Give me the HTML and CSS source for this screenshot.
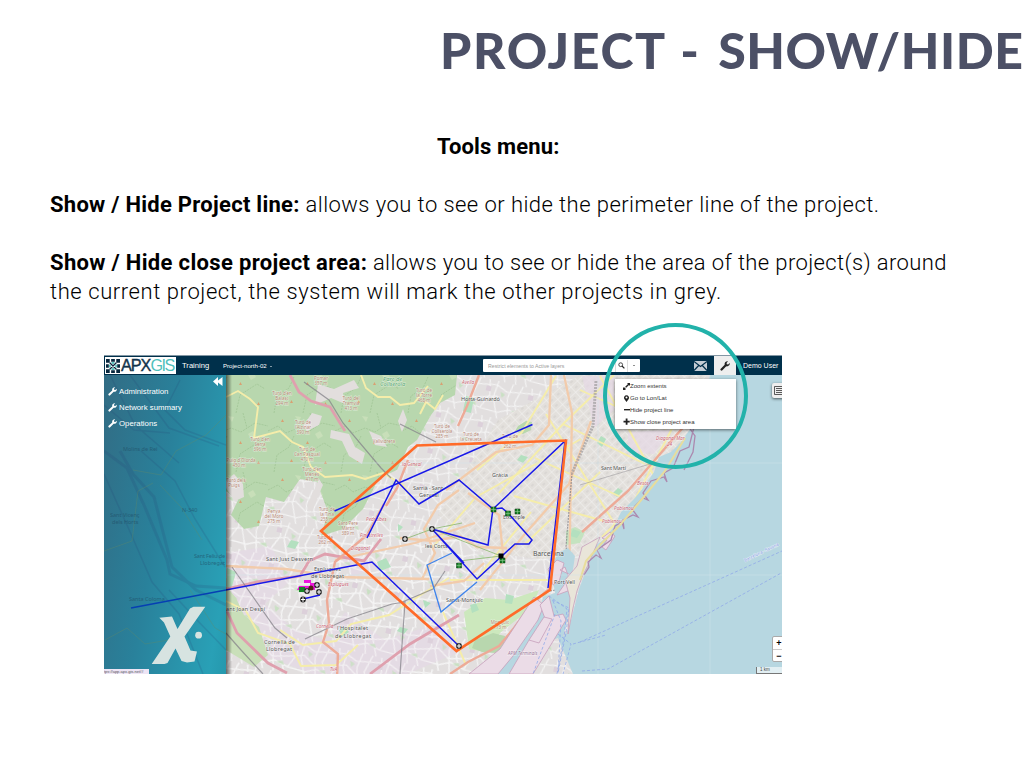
FILE: index.html
```html
<!DOCTYPE html>
<html lang="en">
<head>
<meta charset="utf-8">
<title>Project - Show/Hide</title>
<link rel="stylesheet" href="styles.css">
</head>
<body>
<main class="slide">
<h1 class="title"><span class="t1">PROJECT</span> - <span class="t2">SHOW/HIDE</span></h1>
<section class="copy">
<h2 class="subtitle"><span class="s0">Tools menu:</span></h2>
<p><b class="s1">Show / Hide Project line:</b><span class="s2"> allows you to see or hide the perimeter line of the project.</span></p>
<p><b class="s3">Show / Hide close project area:</b><span class="s4"> allows you to see or hide the area of the project(s) around</span><br><span class="s5">the current project, the system will mark the other projects in grey.</span></p>
</section>
<section class="app">
<svg class="defs" width="0" height="0"><defs><symbol id="wrench" viewBox="0 0 16 16"><path d="M1.200 12.200 7.500 6A4.500 4.500 0 0 1 12.800.5L10.500 3l.4 2.100 2.100.4 2.500-2.300A4.500 4.500 0 0 1 10 8.500l-6.200 6.300A1.800 1.800 0 0 1 1.200 12.200Z"/></symbol></defs></svg>
<header class="bar">
<div class="logo">
<svg width="15" height="15" viewBox="0 0 15 15"><path fill="#08283f" d="M0 0h4v4H0zM5.500 0h4v3h-4zM11 0h4v4h-4zM0 5.500h3v4H0zM12 5.500h3v4h-3zM0 11h4v4H0zM5.500 12h4v3h-4zM11 11h4v4h-4zM3.500 4.500 4.500 3.500 11.500 10.500 10.500 11.500zM10.500 3.500l1 1-7 7-1-1z"/><path fill="#25b2aa" d="M3.500 5.500l2 2-2 2zM11.500 5.500v4l-2-2zM5.500 3.500h4l-2 2zM5.500 11.500l2-2 2 2z"/></svg>
<span class="apx">APX</span><span class="gis">GIS</span>
</div>
<span class="nav">Training</span><span class="project">Project-north-02 <i></i></span>
<div class="search"><span>Restrict elements to Active layers</span><b><svg width="7" height="7" viewBox="0 0 7 7"><circle cx="2.700" cy="2.700" r="1.900" fill="none" stroke="#222" stroke-width=".8"/><path d="m4 4 2.400 2.400" stroke="#222" stroke-width="1.200"/></svg></b><b><i></i></b></div>
<svg class="mail" width="13" height="10" viewBox="0 0 13 10"><path fill="#c4cdd5" d="M0 0h13v10H0z"/><path d="m0 .5 6.500 5 6.500-5M0 9.500l4.700-5M13 9.500l-4.700-5" fill="none" stroke="#00304b" stroke-width="1.200"/></svg>
<span class="tool"><svg width="10" height="10"><use href="#wrench"/></svg></span><span class="user">Demo User</span>
</header>
<div class="stage">
<svg class="map" viewBox="104 375 678 299" width="678" height="299">
<defs>
<pattern id="grid" width="9" height="7" patternUnits="userSpaceOnUse" patternTransform="rotate(-43)"><path d="M0 0h9M0 0v7" stroke="#f3f2f1" stroke-width="1.100"/><path d="M3 3h3v2H3z" fill="#dad7d4"/></pattern>
<pattern id="mesh" width="43" height="37" patternUnits="userSpaceOnUse" patternTransform="rotate(13)"><path d="M0 6 12 4 23 9 43 6M0 19l14-4 12 8 17-4M4 0l3 15-7 15M13 0l-2 17 8 20M28 0l-3 15 5 22M38 0l-5 18 8 19M0 30l18 1 11-5 14 4" fill="none" stroke="#f5f5f5" stroke-width="1.100"/><path d="M17 10l5 2-3 4zM31 27l6-2 2 4z" fill="#c9e0c3"/><path d="M2 7h5v5H2z" fill="#dcd0da"/></pattern>
<pattern id="wood" width="67" height="59" patternUnits="userSpaceOnUse"><path d="M0 18 10 13l8 7 12-5 10 4 14-9 13 3M6 59l3-17 12-8 5-11M35 59l4-18 17-11 8 5M42 0l4 15" fill="none" stroke="#9cc190" stroke-width=".7" stroke-dasharray="2 1"/><path d="m13 9 1.500-3L16 9zM38 31l1.500-3 1.500 3zM56 51l1.500-3 1.500 3zM22 49l1.500-3 1.500 3z" fill="#d9a072"/><path d="m47 21 5-3 3 5-5 3zM27 3l6 1-2 5z" fill="#c8dfb9"/></pattern>
<linearGradient id="shade" x2="1"><stop stop-opacity=".55"/><stop offset="1" stop-opacity="0"/></linearGradient>
</defs>
<path fill="#e2dfdf" d="M104 375h678v299H104z"/><path fill="url(#mesh)" d="M226 375h400v299H226z"/>
<path fill="#e6d9e5" d="m226 553 45-7 18 36-24 22 30 26 30 10 20-28 40 28 48-15 29 26-55 23h-95l-86-34zM582 376h20l9 80-23 10zM343 560l23-4 11 12-25 8z" opacity=".7"/><path fill="url(#mesh)" d="M226 540h240v134H226z" opacity=".8"/>
<path fill="#e3e0dc" d="m438 515 60-95 83-45h125l-12 67-90 112-65 5-62-8z"/><path fill="url(#grid)" d="m438 515 60-95 83-45h125l-12 67-90 112-65 5-62-8z"/>
<path fill="#e6d9e5" opacity=".7" d="m628 432 42-2-16 24-26-2zM582 376h32v34l-20 18z"/>
<g fill="#b8d7ae"><path d="M226 375h231l-2 20-15 8-9 12-14 25-9 7-11 23-18 8-16 31-20 20-22 7 7-24-11-30-17-3-16 23-18-5-7 29-15 3-13-14 7-15-23-17z"/><path d="m226 586 10 12 8 17 15 12 9 28-14 12-28-17z" fill="#c9dfb9"/><path d="m464 612 21-14 24 2 30-10-7 18-31 24-15 20-17-3z" fill="#cce8bd"/><path d="m475 640 8-3 10-4 12 3-1 12-8 5-14-1-10-4z"/><path d="m518 426 8-5 6 1-1 8-8 4-8-3z"/><path fill="#c4e3c0" d="m566 531 9-4 10 5-5 11-14 2z"/></g>
<path fill="url(#wood)" d="M226 375h231l-2 20-15 8-9 12-14 25-9 7-11 23-18 8-16 31-20 20-22 7 7-24-11-30-17-3-16 23-18-5-7 29-15 3-13-14 7-15-23-17z"/>
<g fill="#e2dedd"><path d="m318 384 16 5 20-9 5 8-16 5 2 11-14-6-16 7zM331 430l18 4 6 13 10 6-3 11-13-8-7-15-12-3zM369 431l12 5 6 11-12-2zM312 413l10 3-3 9-12 6-4-5zM319 479l4 6-4 9-7 18-5-6zM398 421l5-12 4 11-5 12zM226 481l8-7 9 10 1 13-9 4-9-13z"/></g>
<g fill="#b3e0bf"><path d="m466 396 8 2-3 15-8-2zM227 568l9 4-5 18-5-4zM377 562l9-4 5 9-11 4zM470 605l6-2 3 7-7 3zM506 594l8 2-2 8-7-1zM573 529l8 3-4 6-7-2zM400 627l8 2-4 5-7-3zM339 630l6-3 4 5-7 5zM291 540l8 2-4 7-8-2zM521 455l7 2-5 6-6-3zM601 436l5 3-4 8-5-4zM618 488l5 3-6 6-4-4zM647 409l8 4-5 7-5-4zM398 524l5 3-5 5zM423 600l8 3-6 5z"/></g>
<g fill="none" stroke="#f5edaa" stroke-width="1.900"><path d="m226 397 12-6 12 8 8 8-4 31 26-7 12 11 11 5 8 20 14 10 27-2 13 4 18-6 20 12 8 12M361 375l5 13 12 9 12 0 10 8 14-2 14-17M420 414l6-12 9 7 8-14M280 630l23 15 33-4 15-17 38-9 38-24 22-13M226 601l20 10 12 22 32 11 11 22 35-1 22-20M432 548l44-51 105-58M450 580h100M477 578l54-66M443 612l23 53M477 470l45-38 34-56M499 493l65-70 50-48M524 545l76-73M514 496l90 25M535 458l86 39M563 424l82 40M580 390l86 39M602 537l48-48M630 509l34-65 28-54M546 414l75 120M600 376l60 111"/></g>
<g fill="none" stroke="#f2cbab" stroke-width="2.300"><path d="m226 566 60 3 51 8 92 2M335 560l80-17 60-20M446 490l50-38 36-7 17-20 2-50M422 579l13-26-11-24 14-24 21-15M564 375l8 38-3 170M480 590l44-55 45-51 22-63M468 493l31 22 4 39M400 538l33 3 27-5 17 11 30 1M430 586l34-5 20-18"/></g>
<g fill="none" stroke="#dfa0ae" stroke-width="2.800"><path d="m226 589 31-7 43-6 9-15 16-7 39 7 17-22M290 375l9 17 12 9 19 6 15 24M226 609l11 24 31 30 19 10M370 674l40-30 49-29"/><path stroke="#edaa97" stroke-width="2.400" d="m458 426 9-20 12-31M384 504l-17 31-32 27-8 38 2 23-6 19 15 12-1 23M408 460l-11 28-11 18M549 589l-18 16-17 23-15 18-31 16-18 12M582 532l46-41 58-67"/></g>
<g fill="none" stroke="#85838a" stroke-width="1.200" opacity=".75"><path d="m304 382 25 18 14 23 38 45 10 10M232 567l43 61 12 10M305 639l42-20 45-15 13-2-5 72M400 424l36 18M400 603l33-14 12-18M226 633l15 17 22 24"/><path stroke-width=".6" d="m580 485 90-27"/><path stroke-width="3" stroke-dasharray="2 1" stroke="#a4a1a3" d="m596 381-3 45-21 47"/><path stroke-dasharray="2 1" d="m572 473-6 74 3 13M550 591l25-4M480 674l66-65"/></g>
<path fill="#b7d7e1" d="M710 375h72v299H573l-15-36-18 6-32 30h-14l42-50 7-27 12-4-4-25 7-15 10-5 7 8-3 20-6 8 7 13-10 40 6-9 10-39 6-16 3-23 14-9 12-14 7-15 13-13 10-12 10-15 5-15 12-5 10-10 12-17 8-18 6-17z"/>
<g fill="#ebdce7" stroke="#c7a0bb" stroke-width=".8"><path d="m500 649 34-52 10 8-6 15-25 36-15 18h-29z"/><path d="m549 596 5 20 9-2 3 6-33 54h-24l20-34 18-16-7-19zM548 569l9-9 7 3-5 19-6 3zM565 567l8 22-16 6 14-20-11-5z"/><path fill="#e9e5d9" d="m582 547 18-10-12 28-6 12-5 14-4 17-5 26 2-36-5-18 12-14z"/><path d="m602 538 8-6 5 4-9 14-4-3 5-7-5-2zM529 640l15-23 8 2-13 24z"/></g>
<g fill="none" stroke="#ac89af" stroke-width="1.300"><path d="m584 575 5-8-1-5 8-7 5 3-4-8 14-10 4-14 7-4 2 7-1-9 10-5 5 2-6-8 11-11 5 2-5-7 8-12 13-4 3 5-3-9 9-5 7-17 9-4 7-28M684 470l9-18 2-16-7-10"/></g>
<path fill="none" stroke="#e8dd9c" stroke-width="2" d="m580 580 6-19 15-17 19-19 22-26 23-28 20-33"/>
<g stroke="#d1e3e9" stroke-width=".5"><path d="M226 463h556M598 375v299M710 375v299M226 575h556"/></g>
<g fill="none" stroke="#91a9e9" stroke-width=".8" stroke-dasharray="3 2"><path d="m582 671 26-2 175-97M580 642l202-91M552 600l17 8-3 25-8 40M549 596l18 13-3 29-7 36M553 601l8 20-3 53M558 634l13 10-8 30M555 614l-22 60M573 644l33-9"/></g>
<g class="labels" font-family="Noto Sans" font-size="5.600" fill="#555" stroke="#fff" stroke-width="1" stroke-opacity=".5" paint-order="stroke">
<text x="461" y="401" textLength="39">Horta-Guinardó</text><text x="492" y="477" textLength="16">Gràcia</text><text x="413" y="490" textLength="30">Sarrià - Sant</text><text x="419" y="497">Gervasi</text><text x="503" y="519" textLength="22">Eixample</text><text x="425" y="548">les Corts</text><text x="533" y="556" font-size="7" textLength="31">Barcelona</text><text x="554" y="584" textLength="21">Port Vell</text><text x="446" y="602" textLength="37">Sants-Montjuïc</text><text x="601" y="470" textLength="25">Sant Martí</text><text x="266" y="561" textLength="47">Sant Just Desvern</text><text x="314" y="571">Esplugues</text><text x="311" y="578" textLength="33">de Llobregat</text><text x="226" y="611" textLength="39">ant Joan Despí</text><text x="264" y="644" textLength="31">Cornellà de</text><text x="266" y="651" textLength="26">Llobregat</text><text x="337" y="630" textLength="31">l'Hospitalet</text><text x="335" y="638" textLength="36">de Llobregat</text>
<g font-size="5.800" fill="#59a875" font-style="italic"><text x="383" y="380.500">Parc de</text><text x="380" y="386">Collserola</text></g>
<g font-size="4.500" fill="#b78774" text-anchor="middle"><text x="321" y="380">Pomar</text><text x="321" y="385">357 m</text><text x="282" y="395">Turó d'en</text><text x="282" y="400">Balasc</text><text x="282" y="405">294 m</text><text x="351" y="400">Turó del</text><text x="351" y="405">Tramvia</text><text x="351" y="410">413 m</text><text x="303" y="424">Turó de</text><text x="303" y="429">l'Alzinar</text><text x="303" y="434">390 m</text><text x="260" y="441">Turó d'en</text><text x="260" y="446">Serra</text><text x="260" y="451">396 m</text><text x="307" y="451">Turó de</text><text x="307" y="456">Can Pasqual</text><text x="307" y="461">470 m</text><text x="312" y="471">Turó d'en</text><text x="312" y="476">Meries</text><text x="312" y="481">417 m</text><text x="241" y="462">Puig d'Olorda</text><text x="239" y="467">450 m</text><text x="236" y="482">Turó dels</text><text x="234" y="487">Puigs</text><text x="274" y="513">Penya</text><text x="274" y="518">del Moro</text><text x="274" y="523">275 m</text><text x="327" y="511">Turó de</text><text x="327" y="516">la Tina</text><text x="327" y="521">255 m</text><text x="348" y="525">Sant Pere</text><text x="348" y="530">Màrtir</text><text x="348" y="535">389 m</text><text x="325" y="539">Turó de</text><text x="325" y="544">262 m</text><text x="424" y="392">Turó de</text><text x="424" y="397">la Torre</text><text x="424" y="402">468 m</text><text x="384" y="443">Vallvidrera</text><text x="442" y="428">Turó de</text><text x="442" y="433">Collserola</text><text x="442" y="438">285 m</text><text x="471" y="436">Turó de</text><text x="471" y="441">la Creueta</text><text x="510" y="438">Turó de</text><text x="510" y="448">262 m</text><text x="500" y="624">Montjuïc</text><text x="500" y="629">173 m</text></g>
<g font-size="4.700" fill="#cc6575" font-style="italic"><text x="402" y="466">la Geneal</text><text x="366" y="521">Pedralbes</text><text x="360" y="537">Finestrelles</text><text x="351" y="550">Diagonal</text><text x="328" y="586">Esplugues</text><text x="316" y="628">Cornellà</text><text x="330" y="671">TvA</text><text x="462" y="384">Avella</text><text x="656" y="440">Diagonal Mar</text><text x="667" y="446">24</text><text x="637" y="485">Besòs</text><text x="614" y="510">Poblenou</text><text x="602" y="523">Poblenou</text></g><text x="508" y="655" font-size="4.500" fill="#987797" font-style="italic">APM Terminals</text><text transform="translate(745 562) rotate(-26)" font-size="4.600" fill="#8d9be7" textLength="38">Barcelona - Savona</text></g>
<path d="m452 553-25 12 14 47 36-30" fill="none" stroke="#3f84eb" stroke-width="1.300"/>
<path d="m405 539 27-10 30-6M432 529l69 27-42 5" fill="none" stroke="#93bb79" stroke-width=".9"/>
<g fill="none" stroke="#1818e8" stroke-width="1.500"><path d="m334.500 511 198-86.500M367 538l29-58 23 24 40-24 34 29 72-68-17 147M493 509l-5 36-56-16 45 50 38-35h14l3-4-24-27-6-5-9 1M432 529l32 34"/><path d="m131 608 241-46 87 84M303 599l17-4M300 589l17-3"/></g>
<path d="m321 531 96-85.500 149-5-16 149.500-93.500 61z" fill="none" stroke="#ff6b29" stroke-width="2.600"/>
<path d="M304 580h7v3h-7zM299 586h16v4h-18zM310 583h7v5h-7z" fill="#ed16dc"/><path d="M299 587h6v5h-6z" fill="#178526"/><circle cx="311" cy="588" r="2.500" fill="#512113"/><path fill="#168327" stroke="#082d0e" stroke-width=".5" d="M491 507h5v5h-5zM505.500 511h5v5h-5zM515 509h5v5h-5zM456.500 563h5v5h-5zM500 558h5v5h-5z"/><path stroke="#8ec88f" stroke-width=".6" d="M491 509.500h5M493.500 507v5M505.500 513.500h5M508 511v5M515 511.500h5M517.500 509v5M456.500 565.500h5M459 563v5M500 560.500h5M502.500 558v5"/><path d="M498.500 553.500h5v5h-5z"/>
<g id="node"><circle cx="432" cy="529" r="2.900" fill="#222"/><path d="M429.800 529h4.400M432 526.800v4.400" stroke="#fff" stroke-width="1.100"/></g><use href="#node" x="-27" y="10"/><use href="#node" x="27" y="117"/><use href="#node" x="-115" y="56"/><use href="#node" x="-113" y="63"/><use href="#node" x="-129" y="70.500"/><use href="#node" x="-125" y="62"/>
<path d="M226 375h6v299h-6z" fill="url(#shade)"/>
</svg>
<aside class="side">
<svg class="under" width="122" height="299" viewBox="104 375 122 299"><g fill="none" stroke="#243e73" opacity=".16"><path stroke-width="3" d="m104 451 23 17 17 37 23 55 3 14 26 12 30 2"/><path stroke-width="3" d="m120 451 13 23 21 23 18 70 24 23 30 15"/><path stroke-width="1.500" d="m141 451 34 30 20 38 30 48M104 474l27 60 21 48 27 32 24 60M169 590l28 30 29 30M110 375l25 50 44 38M130 375l39 53 50 18M104 405l30 25 36 3M180 380l-15 30 20 20 41 15"/></g><g fill="none" stroke="#638a65" opacity=".35"><path d="m104 551 28-10 6-50 15-8M160 485l21 22 21 33M190 590l25 38 11 6M133 470l28 5 15-24 30-16 20-20M105 640l22-12 18 16 30-5"/></g><path d="m131 608 95-18" stroke="#063fb3" stroke-width="1.500"/><g font-family="Noto Sans" font-size="5.500" fill="#214e67" opacity=".65"><text x="123" y="451">Molins de Rei</text><text x="110" y="517">Sant Vicenç</text><text x="112" y="524">dels Horts</text><text x="194" y="558" textLength="31">Sant Feliu de</text><text x="200" y="565" textLength="25">Llobregat</text><text x="129" y="601">Santa Coloma</text><text x="182" y="512">N-340</text></g><g fill="#e2e9e5" opacity=".94"><path d="M159.300 617.700 172 616.500 177.500 629 190 608.500 193.500 606.700H205.300L184.500 636.500 190.500 650.500 197 651.500 194.500 661.500 187 662.500 181.500 661 175.500 648.500 167.500 663 164.500 664H151.700L170.300 636.500 164 622.500z"/><circle cx="198.600" cy="635.200" r="3.400"/></g></svg>
<nav><a><svg><use href="#wrench"/></svg><span>Administration</span></a><a><svg><use href="#wrench"/></svg><span>Network summary</span></a><a><svg><use href="#wrench"/></svg><span>Operations</span></a></nav>
<svg class="collapse" width="10" height="9" viewBox="0 0 10 9"><path fill="#fff" d="m5 0-5 4.500L5 9V5.500L9.500 9V0L5 3.500z"/></svg><span class="url">tps://app.apx-gis.net/#</span>
</aside>
<div class="menu">
<p><svg viewBox="0 0 7 7"><path d="M0 4v3h3l-1-1 .8-.8-1-1L1 5zM7 3V0H4l1 1-2.800 2.800 1 1L6 2z"/></svg><span>Zoom extents</span></p><p><svg viewBox="0 0 7 7"><path fill-rule="evenodd" d="M3.500 7 1.300 4A2.500 2.500 0 1 1 5.700 4zM3.500 1.500a1 1 0 1 0 0 2 1 1 0 0 0 0-2"/></svg><span>Go to Lon/Lat</span></p><p><svg viewBox="0 0 7 7"><path d="M1 3h6v1.400H1z"/></svg><span>Hide project line</span></p><p><svg viewBox="0 0 7 7"><path d="M2.700.5h1.800v2.200h2.200v1.800H4.500v2.200H2.700V4.500H.5V2.700h2.200z"/></svg><span>Show close project area</span></p>
</div>
<div class="layers"><svg width="8" height="9" viewBox="0 0 8 9"><path d="M.5.500h9v8h-9zM2 2.500h7M2 4.500h7M2 6.500h7" fill="none" stroke="#333" stroke-width=".8"/></svg></div><div class="zoom"><b>+</b><b>−</b></div><div class="scale">1 km</div>
</div>
<div class="ring"></div>
</section>
</main>
</body>
</html>
```
FILE: styles.css
```css
* { box-sizing: border-box; }
body { margin: 0; background: #fff; color: #000; font-family: Roboto, "Open Sans", sans-serif; }
.slide { width: 1024px; height: 768px; overflow: hidden; }
.title { margin: 0; height: 132px; padding: 20px 0 0 440px; font: 900 50px/60px Lato, sans-serif; color: #4c5066; white-space: nowrap; letter-spacing: 1.42px; }
.t1 { letter-spacing: 1.7px; }
.t2 { margin-left: 4.5px; letter-spacing: .55px; }
.copy { height: 223px; padding: 0 50px; font-size: 22px; line-height: 29px; font-weight: 300; white-space: nowrap; }
.copy p { margin: 0 0 29px; }
.copy b { font-weight: 700; }
.s0 { letter-spacing: .15px; }
.s1 { letter-spacing: .27px; }
.s2 { letter-spacing: .44px; }
.s3 { letter-spacing: .33px; }
.s4 { letter-spacing: .38px; }
.s5 { letter-spacing: .58px; }
.subtitle { margin: 0 0 29px; padding-left: 387px; font-size: 22px; line-height: 29px; font-weight: 700; }
.app { position: relative; width: 678px; height: 319px; margin-left: 104px; font-family: "Liberation Sans", Arial, sans-serif; }
.defs { position: absolute; }
.bar { height: 20px; padding-top: 1px; background: linear-gradient(#8397a4 1px, #00304b 1px); color: #fff; display: flex; align-items: center; white-space: nowrap; }
.logo { width: 71px; height: 17px; margin-left: 1px; padding-left: 1px; background: #fff; display: flex; align-items: center; font-size: 16.2px; letter-spacing: -1px; overflow: hidden; }
.logo svg { flex: none; width: 14px; height: 14px; }
.apx { color: #12344c; margin-left: 1px; -webkit-text-stroke: .4px #12344c; }
.gis { color: #4fc0bb; letter-spacing: -1.5px; }
.nav { width: 41px; margin-left: 6px; font-size: 7.6px; }
.project { width: 260px; font-size: 6.1px; }
.project i, .search i { display: inline-block; border: 1px solid transparent; border-top-color: currentColor; margin-left: 2px; }
.search { width: 157px; height: 13px; background: #fff; color: #999; font-size: 5.2px; display: flex; align-items: center; border-radius: 1px; }
.search span { width: 132px; padding-left: 5px; }
.search b { width: 12px; height: 12px; border-left: 1px solid #ddd; display: flex; align-items: center; justify-content: center; color: #222; }
.search i { margin: 1px 0 0; }
.mail { margin-left: 54px; }
.tool { width: 22px; height: 19px; margin-left: 7px; background: #eee; fill: #222; display: flex; align-items: center; justify-content: center; }
.user { font-size: 7px; margin-left: 7px; }
.stage { position: relative; height: 299px; overflow: hidden; }
.map { display: block; }
.side { position: absolute; top: 0; left: 0; width: 122px; height: 299px; background: linear-gradient(100deg, #326c84, #29819b 45%, #29a0b6 90%, #2598ad); }
.under { position: absolute; top: 0; left: 0; }
.side nav { position: relative; padding: 9px 0 0 4px; display: flex; flex-direction: column; }
.side a { height: 15.8px; display: flex; align-items: center; gap: 2px; color: #fff; font-size: 7.8px; white-space: nowrap; }
.side a svg { width: 9px; height: 9px; fill: #fff; }
.collapse { position: absolute; left: 109px; top: 2px; }
.url { position: absolute; left: 0; bottom: 0; width: 45px; height: 5px; background: #eee5f5; color: #555; font-size: 4px; line-height: 5px; overflow: hidden; white-space: nowrap; }
.menu { position: absolute; left: 511px; top: 4px; width: 121px; height: 50px; padding: 1.5px 8px; background: #fff; color: #333; box-shadow: 0 1px 3px #0008; }
.menu p { height: 11.8px; margin: 0; display: flex; align-items: center; font-size: 6.05px; white-space: nowrap; }
.menu svg { width: 7px; height: 7px; flex: none; fill: #222; }
.layers { position: absolute; right: -4px; top: 8px; width: 14px; height: 15px; padding: 3px 2px; background: #eee; border-radius: 2px; box-shadow: 0 1px 3px #0009; }
.layers svg { display: block; }
.zoom { position: absolute; right: -4px; top: 261px; width: 14px; height: 26px; background: #fff; border: 1px solid #aaa; border-radius: 2px; font-size: 9px; line-height: 12px; text-align: center; }
.zoom b { display: block; height: 12px; }
.zoom b + b { border-top: 1px solid #ccc; }
.scale { position: absolute; right: 0; bottom: 0; width: 26px; height: 7px; padding-left: 3px; border: solid #777; border-width: 0 0 1px 1px; background: #fff9; color: #444; font-size: 4.5px; line-height: 6px; }
.ring { position: absolute; left: 499px; top: -32px; width: 145px; height: 146px; border: 4px solid #22b2aa; border-radius: 50%; }
```
